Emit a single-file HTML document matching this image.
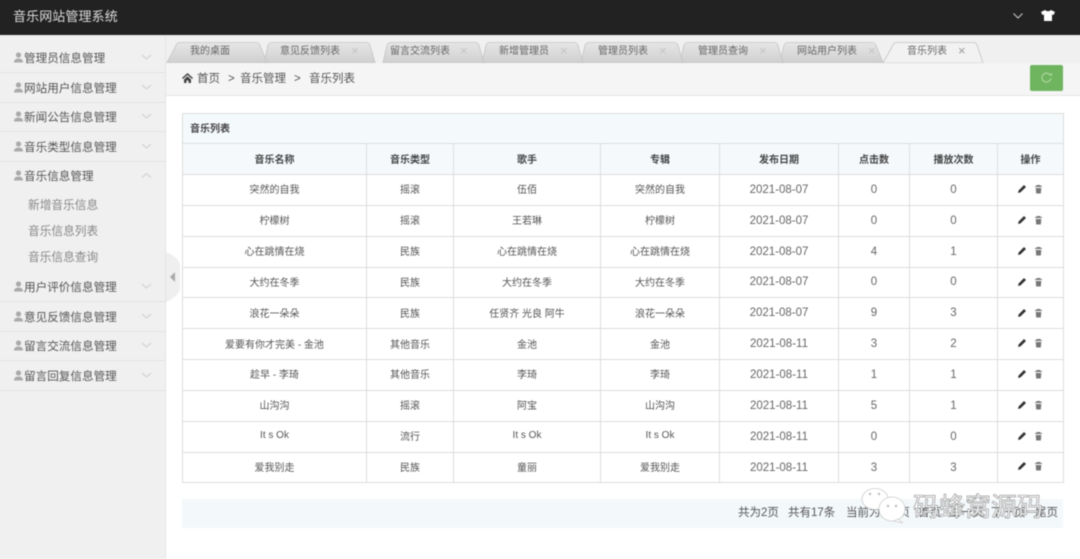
<!DOCTYPE html>
<html lang="zh">
<head>
<meta charset="utf-8">
<title>音乐网站管理系统</title>
<style>
html,body{margin:0;padding:0;background:#fff;overflow:hidden;width:1080px;height:555px}
#o{position:absolute;left:-4px;top:-4px;width:1088px;height:563px;overflow:hidden;background:#fff;filter:blur(.4px)}
#p{position:absolute;left:4px;top:4px;width:1080px;height:555px;font-family:"Liberation Sans","Noto Sans CJK SC",sans-serif;color:#555}
#p div,#p span,#p svg{position:absolute}
#top{left:-4px;top:-4px;width:1088px;height:39px;background:#222}
#sys{left:13px;top:8px;font-size:13px;line-height:18px;color:#ddd;white-space:nowrap;letter-spacing:.1px}
#side{left:-4px;top:35px;width:169px;height:524px;background:#f0f0f0;border-right:1px solid #e4e4e4}
.m{left:-4px;width:169px;height:29px;border-bottom:1px solid #e3e3e3;box-sizing:content-box}
.m b{position:absolute;left:28px;top:6px;font-weight:400;font-size:11.6px;line-height:19px;color:#555;white-space:nowrap}
.m svg.u{left:18px;top:9px}
.m svg.c{left:145px;top:11px}
.sub{left:28px;font-size:11.7px;line-height:18px;color:#888;white-space:nowrap}
#tabs{left:166px;top:35px;width:918px;height:28px;background:#f0f0f0;border-bottom:1px solid #c9c9c9}
.tl{top:44px;font-size:10px;line-height:14px;color:#666;white-space:nowrap;transform:translateY(1px)}
.x{top:44px;font-size:13px;line-height:14px;color:#c4c4c4}
#crumb{left:166px;top:63px;width:918px;height:32px;background:#f5f5f5;border-bottom:1px solid #e6e6e6}
.cr{top:71px;font-size:11.5px;line-height:17px;color:#555;white-space:nowrap}
#ref{left:1030px;top:65px;width:33px;height:26px;background:#6fb45f;border-radius:2px}
#tbl{left:182px;top:113px;border-collapse:collapse;position:absolute;table-layout:fixed;width:881px;font-size:10px;color:#555}
#tbl td,#tbl th{border:1px solid #ddd;text-align:center;padding:0;overflow:hidden;white-space:nowrap}
#tbl th{background:#f5f9fc;font-weight:700;font-size:10px;color:#444;padding-bottom:1px;box-sizing:border-box;height:31px}
#tbl td{color:#555;padding-bottom:2px;box-sizing:border-box;height:30.85px}
#tbl td.n{font-size:11.5px;color:#666;padding-bottom:0}
#tbl th.cap{text-align:left;padding-left:7px;background:#f4f9fc;height:30px;padding-bottom:2px}
#pg{left:182px;top:499px;width:881px;height:29px;background:#f3f8fb}
.pt{top:505px;font-size:11.5px;line-height:16px;color:#555;white-space:nowrap}
#wm{left:913px;top:491px;font-size:26px;line-height:32px;color:#fff;-webkit-text-stroke:.7px #999;white-space:nowrap}
</style>
</head>
<body>
<div id="o">
<div id="p">
<div id="top"></div>
<div id="sys">音乐网站管理系统</div>
<svg style="left:1012px;top:12px" width="12" height="8" viewBox="0 0 12 8"><path d="M1.500 1.500 6 6l4.500-4.500" fill="none" stroke="#ccc" stroke-width="1"/></svg>
<svg style="left:1040px;top:9px" width="16" height="13" viewBox="0 0 16 13"><path d="M5 1 1 3l1.500 3L4 5.500V12h8V5.500L13.500 6 15 3l-4-2q-3 2.500-6 0z" fill="#fff"/></svg>

<div id="side"></div>
<div class="m" style="top:43px"><svg class="u" width="9" height="11" viewBox="0 0 9 11"><circle cx="4.500" cy="3" r="2.600" fill="#aaa"/><path d="M0 10.500q0-4 4.500-4t4.500 4z" fill="#aaa"/></svg><b>管理员信息管理</b><svg class="c" width="11" height="7" viewBox="0 0 11 7"><path d="M1 1l4.500 4L10 1" fill="none" stroke="#ccc"/></svg></div>
<div class="m" style="top:73px"><svg class="u" width="9" height="11" viewBox="0 0 9 11"><circle cx="4.500" cy="3" r="2.600" fill="#aaa"/><path d="M0 10.500q0-4 4.500-4t4.500 4z" fill="#aaa"/></svg><b>网站用户信息管理</b><svg class="c" width="11" height="7" viewBox="0 0 11 7"><path d="M1 1l4.500 4L10 1" fill="none" stroke="#ccc"/></svg></div>
<div class="m" style="top:102px"><svg class="u" width="9" height="11" viewBox="0 0 9 11"><circle cx="4.500" cy="3" r="2.600" fill="#aaa"/><path d="M0 10.500q0-4 4.500-4t4.500 4z" fill="#aaa"/></svg><b>新闻公告信息管理</b><svg class="c" width="11" height="7" viewBox="0 0 11 7"><path d="M1 1l4.500 4L10 1" fill="none" stroke="#ccc"/></svg></div>
<div class="m" style="top:132px"><svg class="u" width="9" height="11" viewBox="0 0 9 11"><circle cx="4.500" cy="3" r="2.600" fill="#aaa"/><path d="M0 10.500q0-4 4.500-4t4.500 4z" fill="#aaa"/></svg><b>音乐类型信息管理</b><svg class="c" width="11" height="7" viewBox="0 0 11 7"><path d="M1 1l4.500 4L10 1" fill="none" stroke="#ccc"/></svg></div>
<div class="m" style="top:161px;border-bottom:none"><svg class="u" width="9" height="11" viewBox="0 0 9 11"><circle cx="4.500" cy="3" r="2.600" fill="#aaa"/><path d="M0 10.500q0-4 4.500-4t4.500 4z" fill="#aaa"/></svg><b>音乐信息管理</b><svg class="c" width="11" height="7" viewBox="0 0 11 7"><path d="M1 5.500l4.500-4L10 5.500" fill="none" stroke="#ccc"/></svg></div>
<div class="sub" style="top:197px">新增音乐信息</div>
<div class="sub" style="top:223px">音乐信息列表</div>
<div class="sub" style="top:249px">音乐信息查询</div>
<div class="m" style="top:272px"><svg class="u" width="9" height="11" viewBox="0 0 9 11"><circle cx="4.500" cy="3" r="2.600" fill="#aaa"/><path d="M0 10.500q0-4 4.500-4t4.500 4z" fill="#aaa"/></svg><b>用户评价信息管理</b><svg class="c" width="11" height="7" viewBox="0 0 11 7"><path d="M1 1l4.500 4L10 1" fill="none" stroke="#ccc"/></svg></div>
<div class="m" style="top:302px"><svg class="u" width="9" height="11" viewBox="0 0 9 11"><circle cx="4.500" cy="3" r="2.600" fill="#aaa"/><path d="M0 10.500q0-4 4.500-4t4.500 4z" fill="#aaa"/></svg><b>意见反馈信息管理</b><svg class="c" width="11" height="7" viewBox="0 0 11 7"><path d="M1 1l4.500 4L10 1" fill="none" stroke="#ccc"/></svg></div>
<div class="m" style="top:331px"><svg class="u" width="9" height="11" viewBox="0 0 9 11"><circle cx="4.500" cy="3" r="2.600" fill="#aaa"/><path d="M0 10.500q0-4 4.500-4t4.500 4z" fill="#aaa"/></svg><b>留言交流信息管理</b><svg class="c" width="11" height="7" viewBox="0 0 11 7"><path d="M1 1l4.500 4L10 1" fill="none" stroke="#ccc"/></svg></div>
<div class="m" style="top:361px"><svg class="u" width="9" height="11" viewBox="0 0 9 11"><circle cx="4.500" cy="3" r="2.600" fill="#aaa"/><path d="M0 10.500q0-4 4.500-4t4.500 4z" fill="#aaa"/></svg><b>留言回复信息管理</b><svg class="c" width="11" height="7" viewBox="0 0 11 7"><path d="M1 1l4.500 4L10 1" fill="none" stroke="#ccc"/></svg></div>
<svg style="left:165px;top:252px" width="16" height="50" viewBox="0 0 16 50"><path d="M1 0q14 6 14 14v22q0 8-14 14z" fill="#efefef"/><path d="M10 20v10l-5-5z" fill="#aaa"/></svg>

<div id="tabs"></div>
<svg style="left:166px;top:41px" width="830" height="23" viewBox="0 0 830 23">
<defs><linearGradient id="g" x1="0" y1="0" x2="0" y2="1"><stop offset="0" stop-color="#e6e6e6"/><stop offset="1" stop-color="#d0d0d0"/></linearGradient></defs>
<g fill="url(#g)" stroke="#c4c4c4" stroke-width=".8">
<path d="M717 21.500l-7-17q-1-3-4-3H622q-3 0-4 3l-4 17z"/>
<path d="M617 21.500l-5-17q-1-3-4-3H522q-3 0-4 3l-4 17z"/>
<path d="M517 21.500l-5-17q-1-3-4-3H423q-3 0-4 3l-4 17z"/>
<path d="M417 21.500l-5-17q-1-3-4-3H324q-3 0-4 3l-4 17z"/>
<path d="M318 21.500l-5-17q-1-3-4-3H225q-3 0-4 3l-4 17z"/>
<path d="M209 21.500l-5-17q-1-3-4-3H106q-3 0-4 3l-4 17z"/>
<path d="M101 21.500l-7-17q-1-3-4-3H14q-3 0-4 3L1 21.500z"/>
</g>
<path d="M817 22l-6-18q-1-2.500-4-2.500H731q-3 0-4 2.500l-10 18z" fill="#f2f2f2" stroke="#c4c4c4" stroke-width=".8"/>
</svg>
<div class="tl" style="left:190px">我的桌面</div>
<div class="tl" style="left:280px">意见反馈列表</div><div class="x" style="left:351px">×</div>
<div class="tl" style="left:390px">留言交流列表</div><div class="x" style="left:460px">×</div>
<div class="tl" style="left:499px">新增管理员</div><div class="x" style="left:560px">×</div>
<div class="tl" style="left:598px">管理员列表</div><div class="x" style="left:659px">×</div>
<div class="tl" style="left:698px">管理员查询</div><div class="x" style="left:759px">×</div>
<div class="tl" style="left:797px">网站用户列表</div><div class="x" style="left:868px">×</div>
<div class="tl" style="left:907px">音乐列表</div><div class="x" style="left:958px;color:#999">×</div>

<div id="crumb"></div>
<svg style="left:182px;top:73px" width="11" height="10" viewBox="0 0 11 10"><path d="M5.500 0 0 5l1 1 4.500-4 4.500 4 1-1zM2 6.500V10h2.500V7.500h2V10H9V6.500L5.500 3.300z" fill="#444"/></svg>
<div class="cr" style="left:197px">首页</div>
<div class="cr" style="left:228px">&gt;</div>
<div class="cr" style="left:240px">音乐管理</div>
<div class="cr" style="left:294px">&gt;</div>
<div class="cr" style="left:309px">音乐列表</div>
<div id="ref"></div>
<svg style="left:1040px;top:71px" width="13" height="13" viewBox="0 0 13 13"><path d="M10.500 4.500A4.500 4.500 0 1 0 11 7" fill="none" stroke="#b5dcaa" stroke-width="1"/><path d="M9 4.500h3V2z" fill="#b5dcaa"/></svg>

<table id="tbl">
<colgroup><col style="width:184px"><col style="width:87px"><col style="width:147px"><col style="width:119px"><col style="width:119px"><col style="width:71px"><col style="width:88px"><col style="width:66px"></colgroup>
<tr><th colspan="8" class="cap">音乐列表</th></tr>
<tr><th>音乐名称</th><th>音乐类型</th><th>歌手</th><th>专辑</th><th>发布日期</th><th>点击数</th><th>播放次数</th><th>操作</th></tr>
<tr><td>突然的自我</td><td>摇滚</td><td>伍佰</td><td>突然的自我</td><td class="n">2021-08-07</td><td class="n">0</td><td class="n">0</td><td></td></tr>
<tr><td>柠檬树</td><td>摇滚</td><td>王若琳</td><td>柠檬树</td><td class="n">2021-08-07</td><td class="n">0</td><td class="n">0</td><td></td></tr>
<tr><td>心在跳情在烧</td><td>民族</td><td>心在跳情在烧</td><td>心在跳情在烧</td><td class="n">2021-08-07</td><td class="n">4</td><td class="n">1</td><td></td></tr>
<tr><td>大约在冬季</td><td>民族</td><td>大约在冬季</td><td>大约在冬季</td><td class="n">2021-08-07</td><td class="n">0</td><td class="n">0</td><td></td></tr>
<tr><td>浪花一朵朵</td><td>民族</td><td>任贤齐 光良 阿牛</td><td>浪花一朵朵</td><td class="n">2021-08-07</td><td class="n">9</td><td class="n">3</td><td></td></tr>
<tr><td>爱要有你才完美 - 金池</td><td>其他音乐</td><td>金池</td><td>金池</td><td class="n">2021-08-11</td><td class="n">3</td><td class="n">2</td><td></td></tr>
<tr><td>趁早 - 李琦</td><td>其他音乐</td><td>李琦</td><td>李琦</td><td class="n">2021-08-11</td><td class="n">1</td><td class="n">1</td><td></td></tr>
<tr><td>山沟沟</td><td>摇滚</td><td>阿宝</td><td>山沟沟</td><td class="n">2021-08-11</td><td class="n">5</td><td class="n">1</td><td></td></tr>
<tr><td>It s Ok</td><td>流行</td><td>It s Ok</td><td>It s Ok</td><td class="n">2021-08-11</td><td class="n">0</td><td class="n">0</td><td></td></tr>
<tr><td>爱我别走</td><td>民族</td><td>童丽</td><td>爱我别走</td><td class="n">2021-08-11</td><td class="n">3</td><td class="n">3</td><td></td></tr>
</table>

<svg style="left:1017px;top:183px" width="30" height="292" viewBox="0 0 30 292">
<defs><g id="ic"><path d="M1 10l.6-2.500L7 2l2 2-5.500 5.400z" fill="#333"/><path d="M19.500 2h4v1H25v1h-7V3h1.500zM18.700 5h5.600l-.5 5.500h-4.600z" fill="#777"/></g></defs>
<use href="#ic" y="0"/><use href="#ic" y="31"/><use href="#ic" y="62"/><use href="#ic" y="93"/><use href="#ic" y="124"/><use href="#ic" y="154"/><use href="#ic" y="185"/><use href="#ic" y="216"/><use href="#ic" y="247"/><use href="#ic" y="277"/>
</svg>

<div id="pg"></div>
<div class="pt" style="left:738px">共为2页</div>
<div class="pt" style="left:788px">共有17条</div>
<div class="pt" style="left:846px">当前为第1页</div>
<div class="pt" style="left:918px">首页</div>
<div class="pt" style="left:949px">上一页</div>
<div class="pt" style="left:991px">下一页</div>
<div class="pt" style="left:1035px">尾页</div>
<div id="wm">码蜂窝源码</div>
<svg style="left:860px;top:488px" width="50" height="42" viewBox="0 0 50 42"><g fill="#fff" stroke="#ccc" stroke-width=".8"><ellipse cx="15" cy="11" rx="13" ry="10.500"/><ellipse cx="32" cy="21" rx="13" ry="12"/><path d="M38 31l5 4-9-2z"/></g><g fill="#bbb"><circle cx="10" cy="6" r="1.200"/><circle cx="19" cy="6" r="1.200"/><circle cx="28" cy="18" r="1.200"/><circle cx="36" cy="18" r="1.200"/></g></svg>
</div>
</div>
</body>
</html>
